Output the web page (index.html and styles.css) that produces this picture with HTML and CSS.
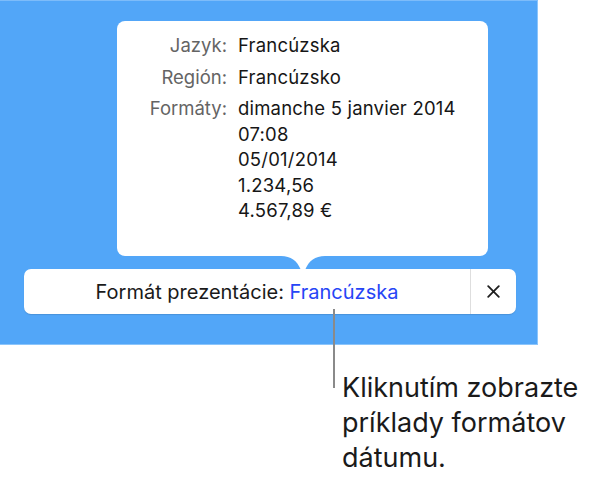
FILE: index.html
```html
<!DOCTYPE html>
<html lang="sk">
<head>
    <meta charset="UTF-8">
    <meta name="viewport" content="width=device-width, initial-scale=1.0">
    <title>Formát prezentácie</title>
    <link rel="stylesheet" href="styles.css">
</head>
<body>
    <div class="scene">
        <div class="panel">
            <div class="popover">
                <div class="info-row">
                    <span class="info-label">Jazyk:</span>
                    <span class="info-value">Francúzska</span>
                </div>
                <div class="info-row">
                    <span class="info-label">Región:</span>
                    <span class="info-value">Francúzsko</span>
                </div>
                <div class="info-row">
                    <span class="info-label">Formáty:</span>
                    <span class="info-value">
                        dimanche 5 janvier 2014<br>
                        07:08<br>
                        05/01/2014<br>
                        1.234,56<br>
                        4.567,89 €
                    </span>
                </div>
                <svg class="popover-tip" width="44" height="16" viewBox="0 0 44 16">
                    <path d="M0 0 H44 C34 0 28 5 24.5 13 L22 16 L19.5 13 C16 5 10 0 0 0 Z" fill="#fff"/>
                </svg>
            </div>

            <div class="format-bar">
                <div class="format-text">Formát prezentácie: <span class="format-link">Francúzska</span></div>
                <button class="close-btn" type="button">
                    <svg width="13" height="13" viewBox="0 0 13 13">
                        <path d="M1.2 1.2 L11.8 11.8 M11.8 1.2 L1.2 11.8" stroke="#1f1f1f" stroke-width="1.8" stroke-linecap="round"/>
                    </svg>
                </button>
            </div>
        </div>

        <span class="callout-line"></span>
        <p class="callout-text">Kliknutím zobrazte<br>príklady formátov<br>dátumu.</p>
    </div>
</body>
</html>
```

FILE: styles.css
```css
body {
    margin: 0;
    background: #ffffff;
    font-family: "Inter", "Noto Sans", sans-serif;
    color: #1d1d1f;
}

.scene {
    position: relative;
    width: 595px;
    height: 483px;
}

.panel {
    box-sizing: border-box;
    width: 538px;
    height: 345px;
    background: #52a6f8;
    border-top: 1px solid #7dbcfa;
    border-right: 1px solid #8cc5fb;
    border-bottom: 1px solid #8cc5fb;
    padding-top: 20px;
}

.popover {
    position: relative;
    box-sizing: border-box;
    width: 371px;
    height: 235px;
    margin-left: 117px;
    padding: 12px 0 0 12px;
    background: #ffffff;
    border-radius: 8px;
    font-size: 18.5px;
    line-height: 25.5px;
}

.info-row {
    display: grid;
    grid-template-columns: 98px auto;
    column-gap: 11px;
    margin-bottom: 6px;
}

.info-label {
    text-align: right;
    color: #646464;
}

.info-value {
    color: #161616;
    letter-spacing: 0.2px;
}

.popover-tip {
    position: absolute;
    top: 100%;
    left: 164px;
    display: block;
}

.format-bar {
    display: flex;
    box-sizing: border-box;
    width: 492px;
    height: 45px;
    margin: 13px 0 0 24px;
    background: #ffffff;
    border-radius: 7px;
    box-shadow: 0 1px 1px rgba(0, 0, 0, 0.12);
}

.format-text {
    flex: 1;
    display: flex;
    align-items: center;
    justify-content: center;
    padding-top: 1px;
    font-size: 20px;
    color: #1a1a1a;
    white-space: pre;
}

.format-link {
    color: #2645f6;
}

.close-btn {
    width: 46px;
    padding: 0;
    border: none;
    border-left: 1px solid #dedede;
    background: transparent;
    display: flex;
    align-items: center;
    justify-content: center;
}

.callout-line {
    position: absolute;
    left: 333px;
    top: 309px;
    width: 2px;
    height: 79px;
    background: #8a8a8a;
}

.callout-text {
    margin: 25px 0 0 342px;
    font-size: 27px;
    line-height: 35px;
    color: #1a1a1a;
}
```
